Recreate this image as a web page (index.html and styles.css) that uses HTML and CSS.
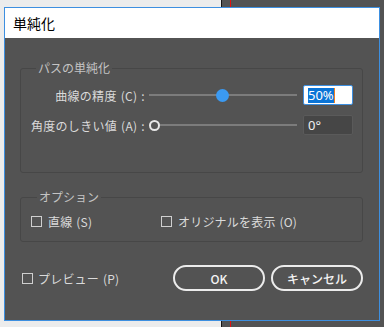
FILE: index.html
```html
<!DOCTYPE html>
<html lang="ja">
<head>
    <meta charset="UTF-8">
    <meta name="viewport" content="width=device-width, initial-scale=1.0">
    <title>単純化</title>
    <link rel="stylesheet" href="styles.css">
</head>
<body>
    <div class="dialog">
        <div class="title-bar">単純化</div>

        <div class="dialog-body">
            <fieldset class="group group-path">
                <legend>パスの単純化</legend>
                <div class="row">
                    <span class="row-label">曲線の精度 (C) :</span>
                    <div class="slider">
                        <span class="thumb thumb-filled" style="margin-left: calc(50% - 7px);"></span>
                    </div>
                    <div class="value-box value-active"><span class="selected">50%</span><span class="caret"></span></div>
                </div>
                <div class="row row-second">
                    <span class="row-label">角度のしきい値 (A) :</span>
                    <div class="slider">
                        <span class="thumb thumb-hollow" style="margin-left: 0;"></span>
                    </div>
                    <div class="value-box">0°</div>
                </div>
            </fieldset>

            <fieldset class="group group-options">
                <legend>オプション</legend>
                <div class="check-row">
                    <label class="check check-first"><span class="box"></span>直線 (S)</label>
                    <label class="check"><span class="box"></span>オリジナルを表示 (O)</label>
                </div>
            </fieldset>

            <div class="footer">
                <label class="check preview"><span class="box"></span>プレビュー (P)</label>
                <button class="btn">OK</button>
                <button class="btn">キャンセル</button>
            </div>
        </div>
    </div>
</body>
</html>
```

FILE: styles.css
```css
body {
    margin: 0;
    width: 384px;
    height: 327px;
    overflow: hidden;
    font-family: "Noto Sans CJK JP", "Noto Sans", sans-serif;
    background: linear-gradient(to right,
        #ececec 0, #ececec 221px,
        #151515 221px, #151515 222px,
        #535353 222px, #535353 230px,
        #e31010 230px, #e31010 231px,
        #535353 231px);
}
.dialog {
    margin: 7px 0 0 4px;
    width: 374px;
    height: 312px;
    border: 1px solid #3d8fe0;
    background-color: #535353;
}
.title-bar {
    height: 30px;
    line-height: 30px;
    padding-left: 8px;
    background-color: #fff;
    color: #000;
    font-size: 14px;
}
.dialog-body {
    padding: 0 0 0 15px;
}
.group {
    box-sizing: border-box;
    width: 343px;
    margin: 0;
    border: 1px solid #474747;
    border-radius: 3px;
    min-width: 0;
}
.group legend {
    padding: 0 2px;
    margin-left: 6px;
    font-size: 12px;
    line-height: 14px;
    color: #c4c4c4;
}
.group-path {
    margin-top: 23px;
    padding: 10px 9px 37px 9px;
}
.group-options {
    margin-top: 17px;
    padding: 10px 9px 13px 10px;
}
.row {
    display: flex;
    align-items: center;
    height: 20px;
}
.row-second {
    margin-top: 10px;
}
.row-label {
    width: 115px;
    text-align: right;
    font-size: 12px;
    letter-spacing: 0.3px;
    word-spacing: 1px;
    color: #dadada;
    white-space: nowrap;
}
.slider {
    display: flex;
    align-items: center;
    width: 148px;
    height: 14px;
    margin-left: 4px;
    background: linear-gradient(#7c7c7c, #7c7c7c) center / 100% 2px no-repeat;
}
.thumb {
    box-sizing: border-box;
    border-radius: 50%;
}
.thumb-filled {
    width: 13px;
    height: 13px;
    background-color: #3b9af2;
}
.thumb-hollow {
    width: 11px;
    height: 11px;
    border: 2px solid #e6e6e6;
    background-color: #535353;
}
.value-box {
    box-sizing: border-box;
    display: flex;
    align-items: center;
    width: 50px;
    height: 20px;
    margin-left: 6px;
    padding-left: 4px;
    border: 1px solid #5a5a5a;
    border-radius: 2px;
    background-color: #464646;
    color: #f0f0f0;
    font-family: "Noto Sans", sans-serif;
    font-size: 13px;
}
.value-active {
    border-color: #3d8fe0;
    background-color: #fff;
}
.selected {
    background-color: #0a74d6;
    color: #fff;
    line-height: 15px;
}
.caret {
    width: 1px;
    height: 15px;
    background-color: #f08020;
}
.check-row {
    display: flex;
    align-items: center;
    height: 14px;
}
.check {
    display: flex;
    align-items: center;
    font-size: 12px;
    letter-spacing: 0.2px;
    word-spacing: 1px;
    color: #dadada;
    white-space: nowrap;
}
.check-first {
    width: 130px;
}
.box {
    box-sizing: border-box;
    width: 11px;
    height: 11px;
    margin-right: 6px;
    border: 1px solid #cfcfcf;
}
.footer {
    display: flex;
    align-items: center;
    width: 341px;
    margin: 23px 0 0 2px;
}
.preview {
    flex: 1;
}
.preview .box {
    margin-right: 5px;
}
.btn {
    box-sizing: border-box;
    width: 92px;
    height: 26px;
    margin-left: 6px;
    border: 2px solid #ececec;
    border-radius: 13px;
    background: transparent;
    color: #f4f4f4;
    font-family: "Noto Sans CJK JP", "Noto Sans", sans-serif;
    font-size: 12px;
    font-weight: 500;
    padding: 0;
}
```
